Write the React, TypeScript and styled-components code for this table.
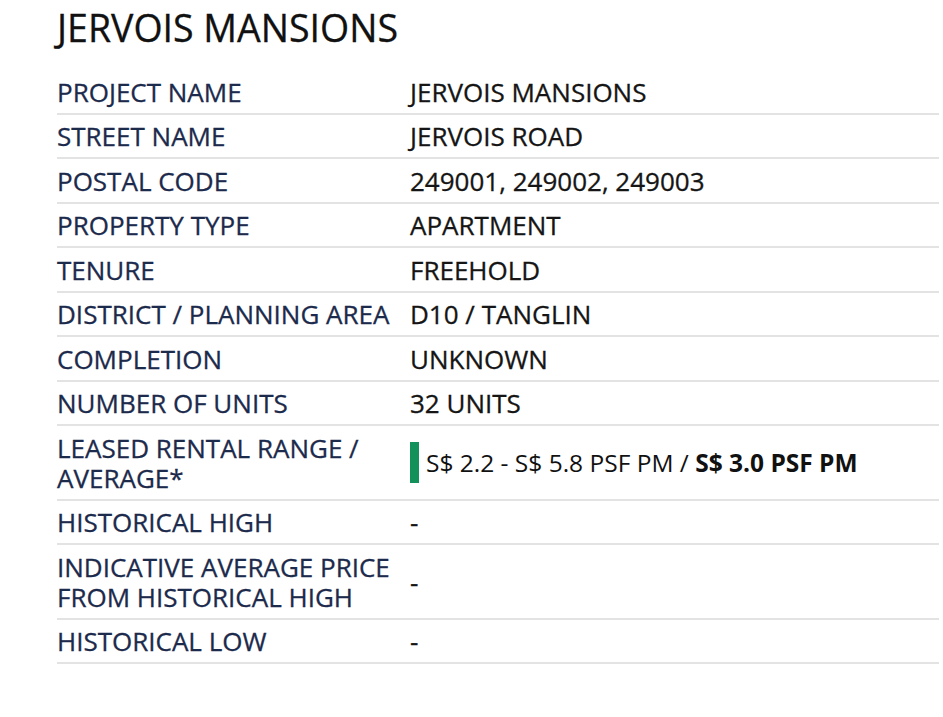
import styled, { createGlobalStyle } from 'styled-components'

const GlobalStyle = createGlobalStyle`
  body {
    margin: 0;
    background: #ffffff;
    font-family: 'Open Sans', 'Liberation Sans', sans-serif;
  }
`

const Page = styled.div`
  padding: 5px 4px 40px 57px;
  width: 882px;
`

const Title = styled.h1`
  margin: 0 0 19px;
  font-family: 'Open Sans', 'Liberation Sans', sans-serif;
  font-size: 37.5px;
  font-weight: 400;
  line-height: 46px;
  color: #111111;
  -webkit-text-stroke: 0.3px #111111;
`

const DetailTable = styled.div`
  display: flex;
  flex-direction: column;
`

const DetailRow = styled.div`
  display: grid;
  grid-template-columns: 353px 1fr;
  align-items: center;
  border-bottom: 2px solid #e3e3e3;
  padding: 6.5px 0 6px;
`

const Label = styled.div`
  font-size: 26px;
  line-height: 30px;
  color: #1c2a4c;
  padding-right: 10px;
  -webkit-text-stroke: 0.3px #1c2a4c;
`

const Value = styled.div`
  font-size: 26px;
  line-height: 30px;
  color: #151515;
  -webkit-text-stroke: 0.3px #151515;
`

const Rental = styled.div`
  display: flex;
  align-items: center;
  gap: 7px;
`

const RentalBar = styled.span`
  display: block;
  width: 9px;
  height: 41px;
  background: #13915a;
`

const RentalText = styled.span`
  font-family: 'Open Sans', 'Liberation Sans', sans-serif;
  font-size: 24.5px;
  font-weight: 400;
  color: #111111;
  -webkit-text-stroke: 0;

  strong {
    font-weight: 700;
  }
`

interface Detail {
  label: string
  value: string
  rental?: boolean
}

const details: Detail[] = [
  { label: 'PROJECT NAME', value: 'JERVOIS MANSIONS' },
  { label: 'STREET NAME', value: 'JERVOIS ROAD' },
  { label: 'POSTAL CODE', value: '249001, 249002, 249003' },
  { label: 'PROPERTY TYPE', value: 'APARTMENT' },
  { label: 'TENURE', value: 'FREEHOLD' },
  { label: 'DISTRICT / PLANNING AREA', value: 'D10 / TANGLIN' },
  { label: 'COMPLETION', value: 'UNKNOWN' },
  { label: 'NUMBER OF UNITS', value: '32 UNITS' },
  { label: 'LEASED RENTAL RANGE / AVERAGE*', value: '', rental: true },
  { label: 'HISTORICAL HIGH', value: '-' },
  { label: 'INDICATIVE AVERAGE PRICE FROM HISTORICAL HIGH', value: '-' },
  { label: 'HISTORICAL LOW', value: '-' },
]

function RentalValue() {
  return (
    <Rental>
      <RentalBar />
      <RentalText>
        S$ 2.2 - S$ 5.8 PSF PM / <strong>S$ 3.0 PSF PM</strong>
      </RentalText>
    </Rental>
  )
}

function App() {
  return (
    <>
      <GlobalStyle />
      <Page>
        <Title>JERVOIS MANSIONS</Title>
        <DetailTable>
          {details.map((item) => (
            <DetailRow key={item.label}>
              <Label>{item.label}</Label>
              <Value>{item.rental ? <RentalValue /> : item.value}</Value>
            </DetailRow>
          ))}
        </DetailTable>
      </Page>
    </>
  )
}

export default App
